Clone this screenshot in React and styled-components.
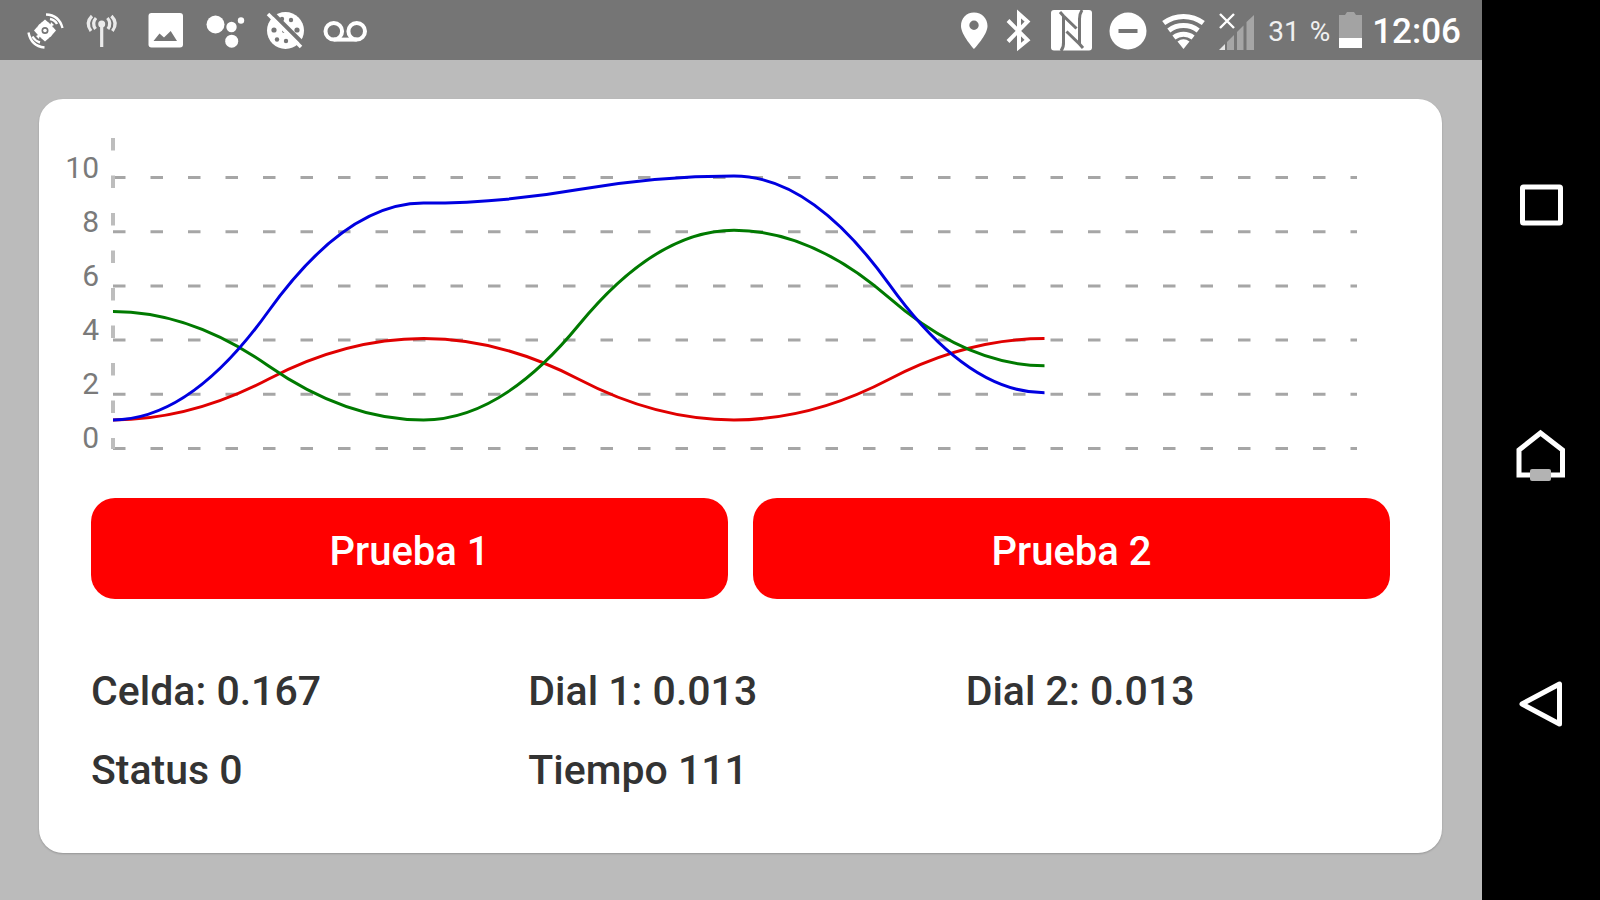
import { useState } from 'react';
import styled, { createGlobalStyle } from 'styled-components';

const GlobalStyle = createGlobalStyle`
  * {
    box-sizing: border-box;
  }

  body {
    margin: 0;
    font-family: Roboto, "Liberation Sans", sans-serif;
    background: #bbbbbb;
  }
`;

const Screen = styled.div`
  display: flex;
  min-height: 100vh;
`;

const Content = styled.div`
  display: flex;
  flex: 1;
  flex-direction: column;
  min-width: 0;
`;

const StatusBar = styled.header`
  display: flex;
  justify-content: space-between;
  height: 60px;
  padding: 0 21px 0 15px;
  color: #ffffff;
  background: #757575;
`;

const Notifications = styled.div`
  display: flex;
`;

const SystemIcons = styled.div`
  display: flex;
  align-items: center;
  gap: ${(props) => props.$gap}px;
`;

const Icon = styled.svg`
  display: block;
  flex: none;
  fill: #ffffff;
`;

const BatteryLevel = styled.span`
  display: flex;
  gap: 10px;
  padding-top: 4px;
  font-size: 28px;
  line-height: 60px;
  color: #f0f0f0;
`;

const Clock = styled.time`
  padding-top: 4px;
  font-size: 35px;
  font-weight: 500;
  line-height: 60px;
`;

const Main = styled.main`
  display: flex;
  flex: 1;
  padding: 39px 40px 47px 39px;
`;

const Card = styled.section`
  flex: 1;
  min-width: 0;
  padding-bottom: 43px;
  border-radius: 24px;
  background: #ffffff;
  box-shadow: 0 1px 2px rgba(0, 0, 0, 0.2);
`;

const ChartSvg = styled.svg`
  display: block;
  width: 100%;
`;

const AxisLabel = styled.text`
  font-size: 30px;
  fill: #7a7a7a;
  text-anchor: end;
`;

const Buttons = styled.div`
  display: grid;
  grid-template-columns: 1fr 1fr;
  gap: 25px;
  margin: 0 52px;
`;

const TestButton = styled.button`
  height: 101px;
  border: none;
  border-radius: 24px;
  padding: 7px 0 0;
  font-family: inherit;
  font-size: 40px;
  font-weight: 500;
  line-height: 48px;
  color: #ffffff;
  background: #ff0000;
  cursor: pointer;
`;

const Readings = styled.div`
  display: grid;
  grid-template-columns: repeat(3, 1fr);
  column-gap: 13px;
  margin: 53px 52px 0;
`;

const Reading = styled.p`
  margin: 0;
  font-size: 41px;
  font-weight: 500;
  line-height: 79px;
  color: #333333;
  white-space: nowrap;
`;

const NavBar = styled.nav`
  display: flex;
  flex-direction: column;
  width: 118px;
  padding: 80px 0 70px;
  background: #000000;
`;

const NavButton = styled.button`
  display: flex;
  flex: 1;
  align-items: center;
  justify-content: center;
  border: none;
  padding: 0;
  background: transparent;
  cursor: pointer;
`;

const BAR = '#757575';
const TICKS = [10, 8, 6, 4, 2, 0];
const SERIES = [
  { color: '#e00000', values: [1, 4, 1, 4] },
  { color: '#007a00', values: [5, 1, 8, 3] },
  { color: '#0000e0', values: [1, 9, 10, 2] },
];

const chartX = (i) => 74 + i * 310.5;
const chartY = (value) => 348 - value * 27.1;

// Two quadratic pieces between each pair of points, joined at the middle
function bezierPath(values) {
  let d = `M${chartX(0)} ${chartY(values[0])}`;
  for (let i = 0; i < values.length - 1; i++) {
    const x1 = chartX(i);
    const x2 = chartX(i + 1);
    const y1 = chartY(values[i]);
    const y2 = chartY(values[i + 1]);
    const midX = (x1 + x2) / 2;
    const midY = (y1 + y2) / 2;
    d += ` Q${(x1 + midX) / 2} ${y1} ${midX} ${midY}`;
    d += ` Q${(x2 + midX) / 2} ${y2} ${x2} ${y2}`;
  }
  return d;
}

function Chart() {
  return (
    <ChartSvg viewBox="0 0 1403 399" role="img" aria-label="Celda, Dial 1, Dial 2">
      <g stroke="#a6a6a6" strokeDasharray="12.5 25">
        {TICKS.map((tick) => (
          <line
            key={tick}
            x1="74"
            x2="1318"
            y1={349.5 - tick * 27.1}
            y2={349.5 - tick * 27.1}
            strokeWidth="3"
          />
        ))}
        <line x1="74" x2="74" y1="39" y2="350" strokeWidth="4" stroke="#bdbdbd" />
      </g>
      {TICKS.map((tick) => (
        <AxisLabel key={tick} x="60" y={349 - tick * 27}>
          {tick}
        </AxisLabel>
      ))}
      {SERIES.map((serie) => (
        <path
          key={serie.color}
          d={bezierPath(serie.values)}
          fill="none"
          stroke={serie.color}
          strokeWidth="3"
        />
      ))}
    </ChartSvg>
  );
}

function NotificationIcons() {
  return (
    <Notifications>
      <Icon width="60" height="60" viewBox="0 0 60 60">
        <circle cx="30" cy="30.5" r="6" fill="none" stroke="#ffffff" strokeWidth="5" />
        <path
          d="M30 19.5 L34 23 H26 Z M30 41.500 L34 38 H26 Z M19 30.500 L22.500 26.500 V34.500 Z M41 30.500 L37.500 26.500 V34.500 Z M36 22 L39 25 L35 27 Z M24 39 L21 36 L25 34 Z"
        />
        <circle cx="30" cy="30.5" r="1.8" />
        <path
          d="M31 14.500 Q44 15 47.500 28 M35 19 Q40 20 42 24 M13.500 32.500 Q16 46 29.500 47.500 M17.500 36.500 Q20 41 25 42.500"
          fill="none"
          stroke="#ffffff"
          strokeWidth="2.4"
        />
      </Icon>
      <Icon width="60" height="60" viewBox="0 0 60 60" opacity="0.85">
        <circle cx="26.700" cy="24" r="3.500" />
        <path
          d="M26.700 23 V47 M17 16 Q10 23 16 31 M36.400 16 Q43.400 23 37.400 31 M21 18 Q16.500 23 20.500 29 M32.400 18 Q36.900 23 32.900 29"
          fill="none"
          stroke="#ffffff"
          strokeWidth="3.200"
        />
      </Icon>
      <Icon width="60" height="60" viewBox="0 0 60 60">
        <rect x="13.500" y="13" width="34.500" height="34.500" rx="3" />
        <path d="M18.500 41 L24.500 33.500 L29 37.500 L35.700 31 L42 41 Z" fill={BAR} />
      </Icon>
      <Icon width="60" height="60" viewBox="0 0 60 60">
        <circle cx="20.500" cy="24.500" r="9" />
        <circle cx="36.500" cy="27" r="5.200" />
        <circle cx="36.700" cy="41.200" r="6.500" />
        <circle cx="46" cy="20.500" r="3.200" />
      </Icon>
      <Icon width="60" height="60" viewBox="0 0 60 60">
        <circle cx="30.500" cy="30.500" r="18.500" />
        <g fill={BAR}>
          <circle cx="27" cy="19" r="2.200" />
          <circle cx="36" cy="20" r="2.200" />
          <circle cx="42" cy="30" r="2.600" />
          <circle cx="19" cy="30" r="2.600" />
          <circle cx="29" cy="31" r="2" />
          <circle cx="22" cy="39.500" r="2.200" />
          <circle cx="31" cy="41" r="2.200" />
        </g>
        <path d="M15 10.500 L49 44.500" stroke={BAR} strokeWidth="4" />
        <path d="M13 14 L46 47" stroke="#ffffff" strokeWidth="3.600" />
      </Icon>
      <Icon width="60" height="60" viewBox="0 0 60 60">
        <g fill="none" stroke="#ffffff" strokeWidth="4">
          <circle cx="18.800" cy="31.300" r="8.300" />
          <circle cx="41.700" cy="31.300" r="8.300" />
          <path d="M18.800 39.600 H41.700" />
        </g>
      </Icon>
    </Notifications>
  );
}

function SystemStatus() {
  return (
    <SystemIcons $gap={9}>
      <SystemIcons $gap={14}>
        <Icon width="32" height="60" viewBox="0 0 32 60">
          <path
            d="M14 12.500 C6 12.500 1 18.500 1 26 C1 35 14 49 14 49 C14 49 27.500 35 27.500 26 C27.500 18.500 22 12.500 14 12.500 Z M14 20.500 A4.700 4.700 0 1 1 14 29.900 A4.700 4.700 0 1 1 14 20.500 Z"
            fillRule="evenodd"
          />
        </Icon>
        <Icon width="31" height="60" viewBox="0 0 31 60">
          <path
            d="M2 20.500 L21.500 40 L13 47 V14 L21.500 21.500 L2 41.500"
            fill="none"
            stroke="#ffffff"
            strokeWidth="4"
          />
        </Icon>
        <Icon width="44" height="60" viewBox="0 0 44 60">
          <rect y="10" width="41" height="40.500" rx="3" />
          <path
            d="M10 51 Q13 47 12.500 42 V16 L25.500 28.500 M9 12 L12.500 16 M31 10 Q28.500 14 28.500 19 V44 L15.500 31.500 M28.500 44 L32 48"
            fill="none"
            stroke={BAR}
            strokeWidth="3"
          />
        </Icon>
        <Icon width="39" height="60" viewBox="0 0 39 60">
          <circle cx="19" cy="31" r="18.500" />
          <rect x="9.500" y="29" width="19" height="4" fill={BAR} />
        </Icon>
        <Icon width="43" height="60" viewBox="0 0 43 60">
          <g fill="none" stroke="#ffffff" strokeWidth="5">
            <path d="M1.700 23 A33 33 0 0 1 41.300 23" />
            <path d="M6.800 30.500 A24.500 24.500 0 0 1 36.200 30.500" />
            <path d="M11.900 37.500 A16 16 0 0 1 31.100 37.500" />
          </g>
          <path d="M21.500 49 L15.500 41.500 A10 10 0 0 1 27.500 41.500 Z" />
        </Icon>
        <Icon width="35" height="60" viewBox="0 0 35 60">
          <path d="M1 14 L15 28 M15 14 L1 28" stroke="#ffffff" strokeWidth="2.400" />
          <g fill="#a6a6a6">
            <path d="M8 42 L15 35 V50 H8 Z" />
            <path d="M18 32 L24.500 25.500 V50 H18 Z" />
            <path d="M27.500 22 L35 15 V50 H27.500 Z" />
          </g>
          <path d="M0 50 L6 44 V50 Z" fill="#e6e6e6" />
        </Icon>
        <BatteryLevel>
          <span>31</span>
          <span>%</span>
        </BatteryLevel>
      </SystemIcons>
      <Icon width="24" height="60" viewBox="0 0 24 60">
        <path d="M0 15 H6 L8 12 H15 L17 15 H23 V38 H0 Z" fill="#a3a3a3" />
        <rect y="38" width="23" height="10" />
      </Icon>
      <Clock>12:06</Clock>
    </SystemIcons>
  );
}

function App() {
  const [test, setTest] = useState(null);

  return (
    <>
      <GlobalStyle />
      <Screen>
        <Content>
          <StatusBar>
            <NotificationIcons />
            <SystemStatus />
          </StatusBar>
          <Main>
            <Card>
              <Chart />
              <Buttons>
                <TestButton type="button" aria-pressed={test === 1} onClick={() => setTest(1)}>
                  Prueba 1
                </TestButton>
                <TestButton type="button" aria-pressed={test === 2} onClick={() => setTest(2)}>
                  Prueba 2
                </TestButton>
              </Buttons>
              <Readings>
                <Reading>Celda: 0.167</Reading>
                <Reading>Dial 1: 0.013</Reading>
                <Reading>Dial 2: 0.013</Reading>
                <Reading>Status 0</Reading>
                <Reading>Tiempo 111</Reading>
              </Readings>
            </Card>
          </Main>
        </Content>
        <NavBar>
          <NavButton type="button" aria-label="Recientes">
            <Icon width="50" height="54" viewBox="0 0 50 54">
              <rect x="6.500" y="9" width="38" height="36" rx="1" fill="none" stroke="#ffffff" strokeWidth="5" />
            </Icon>
          </NavButton>
          <NavButton type="button" aria-label="Inicio">
            <Icon width="50" height="54" viewBox="0 0 50 54">
              <path d="M3 47 V22 L24.500 5 L46.500 22 V47 Z" fill="none" stroke="#ffffff" strokeWidth="5" />
              <rect x="14" y="41" width="21" height="12" rx="2" fill="#b3b3b3" />
            </Icon>
          </NavButton>
          <NavButton type="button" aria-label="Atrás">
            <Icon width="50" height="54" viewBox="0 0 50 54">
              <path
                d="M43.500 6 V46 L6 26 Z"
                fill="none"
                stroke="#ffffff"
                strokeWidth="5"
                strokeLinejoin="round"
              />
            </Icon>
          </NavButton>
        </NavBar>
      </Screen>
    </>
  );
}

export default App;
